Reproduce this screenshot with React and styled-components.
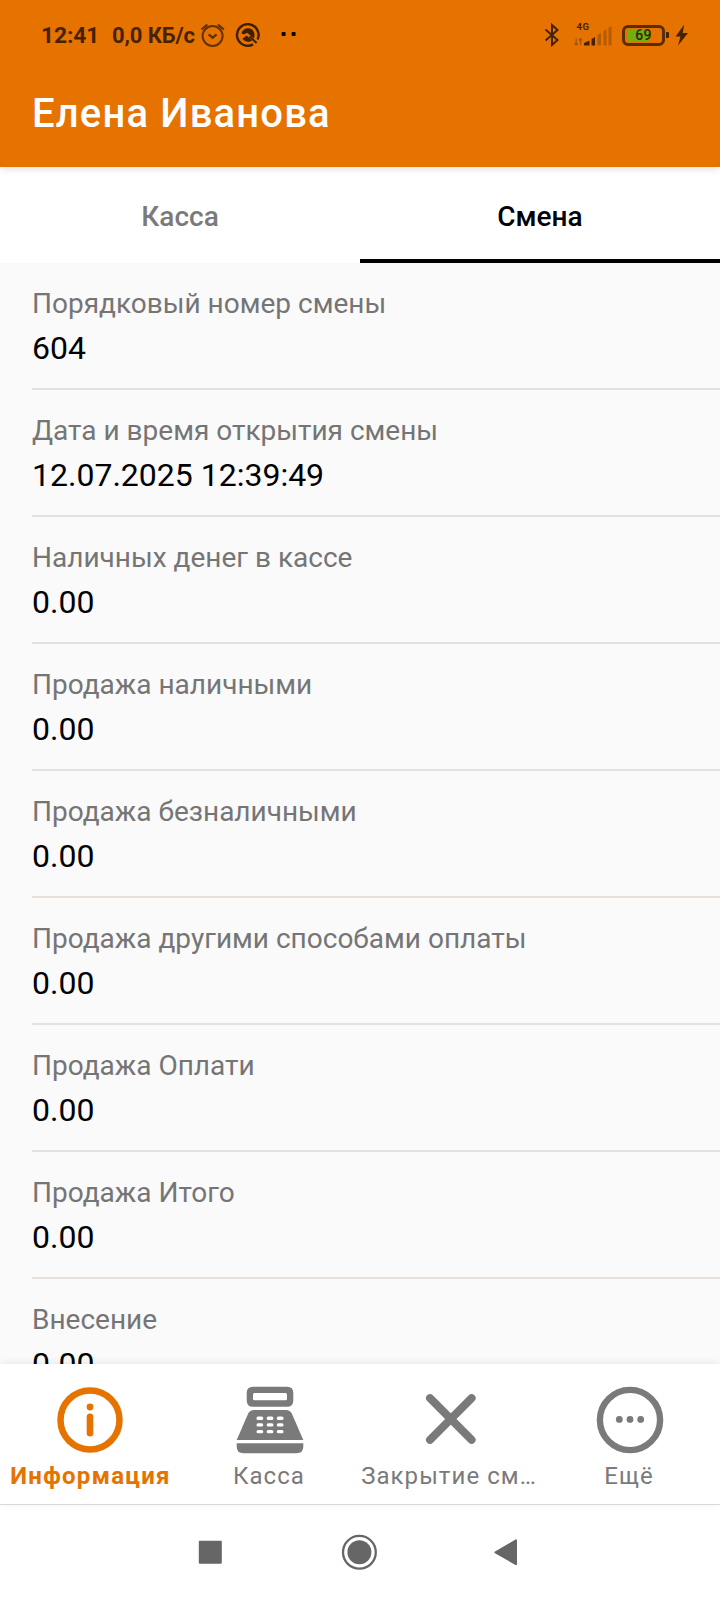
import React from "react";
import styled, { createGlobalStyle } from "styled-components";

const GlobalStyle = createGlobalStyle`
  * { box-sizing: border-box; }
  html, body { margin: 0; padding: 0; background: #fff; }
  body { font-family: Roboto, "Liberation Sans", sans-serif; overflow: hidden; }
  svg { display: block; flex: none; }
`;

const Screen = styled.div`
  width: 720px;
  height: 1600px;
  display: flex;
  flex-direction: column;
  overflow: hidden;
  background: #fafafa;
`;

const Header = styled.header`
  height: 167px;
  flex: none;
  background: #e67300;
  position: relative;
  z-index: 1;
  box-shadow: 0 1px 8px rgba(0, 0, 0, 0.16);
`;

const StatusBar = styled.div`
  height: 70px;
  display: flex;
  align-items: center;
  justify-content: space-between;
  padding: 0 31px 0 41px;
  color: #452300;
`;

const StatusGroup = styled.div`
  display: flex;
  align-items: center;
`;

const StatusText = styled.span`
  width: ${(p) => p.$width}px;
  padding-top: 1px;
  font-size: ${(p) => p.$size}px;
  font-weight: 700;
  line-height: 28px;
  letter-spacing: -0.1px;
  white-space: nowrap;
`;

const Battery = styled.div`
  width: 43px;
  height: 21px;
  margin-left: 10px;
  border: 3px solid #5a2d00;
  border-radius: 6px;
  display: flex;
  align-items: center;
  justify-content: center;
  font-size: 14px;
  font-weight: 500;
  letter-spacing: 0.4px;
  line-height: 16px;
  background: linear-gradient(#72b010, #72b010) 3px 2px / 21px 11px no-repeat;
  color: #2d2400;
`;

const BatteryTip = styled.div`
  width: 3px;
  height: 6px;
  margin-left: 1px;
  border-radius: 0 1px 1px 0;
  background: #452300;
`;

const Title = styled.h1`
  margin: 20px 0 0 32px;
  font-size: 40px;
  line-height: 48px;
  font-weight: 500;
  letter-spacing: 1.17px;
  color: #fff;
`;

const Tabs = styled.div`
  height: 96px;
  flex: none;
  display: flex;
  background: #fff;
`;

const Tab = styled.div`
  flex: 1;
  padding-top: 34px;
  text-align: center;
  font-size: 28px;
  line-height: 32px;
  font-weight: 500;
  color: ${(p) => (p.$active ? "#000" : "#7a7a7a")};
  border-bottom: 4px solid ${(p) => (p.$active ? "#000" : "transparent")};
`;

const List = styled.main`
  flex: 1;
  min-height: 0;
  overflow: hidden;
  padding-left: 32px;
`;

const Row = styled.div`
  height: 127px;
  padding-top: 25px;
  border-bottom: 2px solid #e6e1dc;
`;

const Label = styled.div`
  font-size: 28px;
  line-height: 32px;
  color: #757575;
`;

const Value = styled.div`
  margin-top: 9px;
  font-size: 32px;
  line-height: 38px;
  color: #000;
`;

const BottomNav = styled.nav`
  height: 140px;
  flex: none;
  display: flex;
  background: #fff;
  position: relative;
  z-index: 1;
  box-shadow: 0 -1px 8px rgba(0, 0, 0, 0.08);
`;

const NavItem = styled.div`
  width: 180px;
  padding: 22px 0 0;
  display: flex;
  flex-direction: column;
  align-items: center;
  color: ${(p) => (p.$active ? "#e67300" : "#7a7a7a")};
  font-size: 24px;
  line-height: 28px;
  letter-spacing: ${(p) => (p.$active ? 1.3 : 1.07)}px;
  font-weight: ${(p) => (p.$active ? 700 : 400)};
`;

const NavLabel = styled.span`
  max-width: 180px;
  margin-top: 8px;
  padding: ${(p) => (p.$active ? "0 0 0 1px" : "0 2px 0 0")};
  overflow: hidden;
  white-space: nowrap;
`;

const SystemNav = styled.div`
  height: 96px;
  flex: none;
  padding: 0 0 1px 198px;
  display: flex;
  align-items: center;
  background: #fff;
  border-top: 1px solid #e0e0e0;
`;

const SystemButton = styled.div`
  margin-right: ${(p) => p.$gap || 0}px;
`;

const AlarmIcon = () => (
  <svg width="26" height="26" viewBox="0 0 26 26" fill="none" stroke="#633100" strokeWidth="2">
    <circle cx="12.6" cy="14" r="10" />
    <path d="M1.6 7.5 7.3 2.5M23.8 7.5 18 2.5" strokeWidth="2.2" />
    <path d="M8.6 12.3 12.6 15.7 16.6 12.3" strokeWidth="2.2" />
  </svg>
);

const NotificationIcon = () => (
  <svg width="26" height="26" viewBox="0 0 26 26" fill="none" stroke="#3d1f00">
    <path d="M18 22.4A10.8 10.8 0 1 1 22.6 17.4" strokeWidth="2.4" />
    <path d="M6.4 11.2C7.6 7.8 10.4 6.2 13 6.2C17 6.2 19.8 9.4 19.5 13.4C19.4 14.8 19.1 15.8 18.6 16.6L12.2 10.8L8.8 12.4Z" fill="#3d1f00" stroke="none" />
    <path d="M7.4 16.8 11.6 13.4 17 18.4C14.8 20.6 9.6 20.2 7.4 16.8Z" fill="#3d1f00" stroke="none" />
    <path d="M14.5 14.5 21.6 21" strokeWidth="2" />
  </svg>
);

const DotsIcon = () => (
  <svg width="16" height="6" viewBox="0 0 16 6" fill="#000">
    <rect x="1.6" y="0" width="4" height="4" rx="1" />
    <rect x="11.6" y="0" width="4" height="4" rx="1" />
  </svg>
);

const BluetoothIcon = () => (
  <svg width="16" height="24" viewBox="0 0 16 24" fill="none" stroke="#452300" strokeWidth="2">
    <path d="M1.5 6.5 13.5 17 8 22V2L13.5 7 1.5 17.5" />
  </svg>
);

const SignalIcon = () => (
  <svg width="38" height="24" viewBox="0 0 38 24">
    <text x="2.6" y="7" fontFamily="Roboto" fontSize="9.5" fontWeight="700" fill="#452300" letterSpacing=".5">4G</text>
    <g fill="none" stroke="#a85400" strokeWidth="1.3">
      <path d="M2.2 15.5V22M.5 20 2.2 22 3.8 20M6.5 22V15.5M4.8 17.5 6.5 15.5 8 17.5" />
    </g>
    <path d="M10 22.5V20L15.5 17.5V22.5ZM17.5 22.5V16L21 14V22.5Z" fill="#452300" />
    <path d="M23.5 22.5V12L27 10V22.5ZM29.5 22.5V8L32.5 6.5V22.5ZM34.5 22.5V5L37.5 3V22.5Z" fill="#b65b00" />
  </svg>
);

const BoltIcon = () => (
  <svg width="14" height="22" viewBox="0 0 14 22" fill="#452300">
    <path d="M9.2 .6 .6 12.4H5.4L3.1 21.4 13 9H7.7Z" />
  </svg>
);

const InfoIcon = () => (
  <svg width="68" height="68" viewBox="0 0 68 68">
    <circle cx="34" cy="34" r="29.5" fill="none" stroke="currentColor" strokeWidth="6.5" />
    <circle cx="34" cy="21" r="3.4" fill="currentColor" />
    <rect x="30.7" y="27.5" width="6.6" height="23" rx="3.3" fill="currentColor" />
  </svg>
);

const RegisterIcon = () => (
  <svg width="68" height="68" viewBox="0 0 68 68" fill="currentColor">
    <path
      fillRule="evenodd"
      d="M17 .7H51Q57.3.7 57.3 7V14.5Q57.3 20.8 51 20.8H17Q10.7 20.8 10.7 14.5V7Q10.7.7 17 .7ZM18.5 7Q17 7 17 8.5V12.8Q17 14.3 18.5 14.3H49.5Q51 14.3 51 12.8V8.5Q51 7 49.5 7Z"
    />
    <path d="M18 24H50Q54 24 55.8 27.6L67.3 54H.7L12.2 27.6Q14 24 18 24Z" />
    <path d="M.7 57.2H67.3V60.5Q67.3 67.3 60.5 67.3H7.5Q.7 67.3.7 60.5Z" />
    <g fill="#fff">
      {[30.6, 37.3, 44].map((y) =>
        [20.5, 30.7, 40.8].map((x) => <rect key={`${x}-${y}`} x={x} y={y} width="6.7" height="3.3" rx="1.5" />)
      )}
    </g>
  </svg>
);

const CloseIcon = () => (
  <svg width="68" height="68" viewBox="0 0 68 68" fill="none" stroke="currentColor" strokeWidth="8" strokeLinecap="round">
    <path d="M14 12.2 55.6 53.8M55.6 12.2 14 53.8" />
  </svg>
);

const MoreIcon = () => (
  <svg width="68" height="68" viewBox="0 0 68 68" fill="currentColor">
    <circle cx="34" cy="34" r="30.1" fill="none" stroke="currentColor" strokeWidth="6.4" />
    <circle cx="23.3" cy="33.4" r="3.4" />
    <circle cx="34" cy="33.4" r="3.4" />
    <circle cx="44.7" cy="33.4" r="3.4" />
  </svg>
);

const rows = [
  ["Порядковый номер смены", "604"],
  ["Дата и время открытия смены", "12.07.2025 12:39:49"],
  ["Наличных денег в кассе", "0.00"],
  ["Продажа наличными", "0.00"],
  ["Продажа безналичными", "0.00"],
  ["Продажа другими способами оплаты", "0.00"],
  ["Продажа Оплати", "0.00"],
  ["Продажа Итого", "0.00"],
  ["Внесение", "0.00"],
];

const navItems = [
  { label: "Информация", Icon: InfoIcon, active: true },
  { label: "Касса", Icon: RegisterIcon },
  { label: "Закрытие см…", Icon: CloseIcon },
  { label: "Ещё", Icon: MoreIcon },
];

const Spacer = styled.div`
  width: ${(p) => p.$width}px;
`;

export default function App() {
  return (
    <>
      <GlobalStyle />
      <Screen>
        <Header>
          <StatusBar>
            <StatusGroup>
              <StatusText $width={71} $size={22.8}>12:41</StatusText>
              <StatusText $width={88} $size={22}>0,0 КБ/с</StatusText>
              <AlarmIcon />
              <Spacer $width={9} />
              <NotificationIcon />
              <Spacer $width={19} />
              <DotsIcon />
            </StatusGroup>
            <StatusGroup>
              <BluetoothIcon />
              <Spacer $width={14} />
              <SignalIcon />
              <Battery>69</Battery>
              <BatteryTip />
              <Spacer $width={6} />
              <BoltIcon />
            </StatusGroup>
          </StatusBar>
          <Title>Елена Иванова</Title>
        </Header>
        <Tabs>
          <Tab>Касса</Tab>
          <Tab $active>Смена</Tab>
        </Tabs>
        <List>
          {rows.map(([label, value]) => (
            <Row key={label}>
              <Label>{label}</Label>
              <Value>{value}</Value>
            </Row>
          ))}
        </List>
        <BottomNav>
          {navItems.map(({ label, Icon, active }) => (
            <NavItem key={label} $active={active}>
              <Icon />
              <NavLabel $active={active}>{label}</NavLabel>
            </NavItem>
          ))}
        </BottomNav>
        <SystemNav>
          <SystemButton $gap={119}>
            <svg width="24" height="24" viewBox="0 0 24 24"><rect x=".8" y=".8" width="23" height="23" rx="1" fill="#666" /></svg>
          </SystemButton>
          <SystemButton $gap={116}>
            <svg width="36" height="36" viewBox="0 0 36 36">
              <circle cx="18.4" cy="18.3" r="16.4" fill="none" stroke="#666" strokeWidth="2.3" />
              <circle cx="18.4" cy="18.3" r="12" fill="#666" />
            </svg>
          </SystemButton>
          <SystemButton>
            <svg width="26" height="28" viewBox="0 0 26 28"><path d="M2.5 14.3 23 2.4V26.2Z" fill="#666" stroke="#666" strokeWidth="2" strokeLinejoin="round" /></svg>
          </SystemButton>
        </SystemNav>
      </Screen>
    </>
  );
}
